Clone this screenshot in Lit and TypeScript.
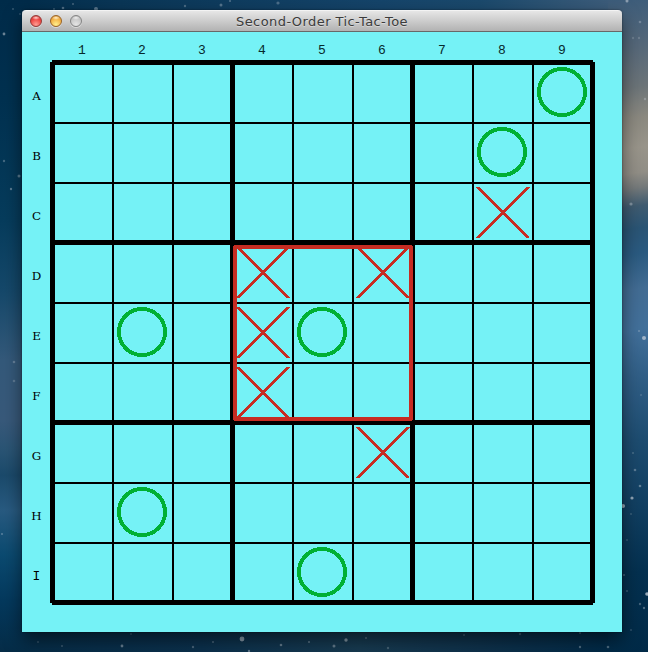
import { LitElement, html, svg, css } from "lit";
import { customElement, property } from "lit/decorators.js";

const CELL = 60;
const LINES = [0, 1, 2, 3, 4, 5, 6, 7, 8, 9];
const COLS = ["1", "2", "3", "4", "5", "6", "7", "8", "9"];
const ROWS = ["A", "B", "C", "D", "E", "F", "G", "H", "I"];

const NOUGHTS = ["A9", "B8", "E2", "E5", "H2", "I5"];
const CROSSES = ["C8", "D4", "D6", "E4", "F4", "G6"];

// x, y, radius, opacity
const STARS: number[][] = [
  [4, 34, 1.4, 0.5], [13, 9, 1, 0.25], [4, 161, 1.2, 0.3], [19, 176, 1.5, 0.4], [11, 189, 1.2, 0.4],
  [14, 362, 1.3, 0.3], [14, 381, 1.3, 0.25], [2, 534, 1, 0.35], [20, 14, 1, 0.2],
  [63, 8, 1.3, 0.35], [73, 4, 1, 0.3], [96, 9, 2, 0.4], [54, 9, 1, 0.25], [185, 6, 1.2, 0.3],
  [221, 5, 1.5, 0.35], [230, 1, 1, 0.35], [278, 3, 1.6, 0.3],
  [627, 1, 1.5, 0.5], [640, 22, 1.3, 0.3], [633, 38, 1.2, 0.2], [639, 38, 1.2, 0.2], [645, 99, 1.2, 0.3],
  [631, 204, 1.6, 0.4], [644, 338, 2, 0.65], [639, 331, 1, 0.3], [641, 395, 1, 0.2],
  [633, 453, 1, 0.25], [635, 470, 1.3, 0.35], [640, 486, 1.3, 0.4], [632, 498, 1.6, 0.65],
  [623, 506, 2, 0.7], [631, 514, 1, 0.2], [627, 540, 1, 0.2], [624, 575, 1, 0.3], [627, 591, 1, 0.25],
  [647, 594, 1.8, 0.7], [640, 604, 1.2, 0.3], [644, 608, 1.2, 0.35], [631, 630, 1, 0.2],
  [62, 646, 1, 0.25], [38, 642, 1, 0.2], [122, 646, 1.4, 0.45], [131, 634, 1, 0.2], [193, 647, 1.2, 0.3],
  [213, 642, 1, 0.3], [242, 639, 2.4, 0.6], [249, 651, 1.2, 0.4], [281, 645, 1.3, 0.4], [309, 642, 1.1, 0.35],
  [334, 646, 1.5, 0.4], [346, 640, 1.7, 0.55], [366, 638, 1, 0.3], [388, 648, 1.2, 0.25],
  [464, 635, 1, 0.25], [520, 634, 1.2, 0.25], [580, 647, 1.2, 0.35], [608, 647, 1.3, 0.35], [580, 633, 1, 0.3],
];

@customElement("star-field")
export class StarField extends LitElement {
  static styles = css`
    :host { position: absolute; inset: 0; }
    svg { display: block; }
    circle { fill: #d5dce4; }
  `;
  render() {
    return html`<svg width="648" height="652">
      ${STARS.map(([x, y, r, o]) => svg`<circle cx=${x} cy=${y} r=${r} opacity=${o}></circle>`)}
    </svg>`;
  }
}

@customElement("title-bar")
export class TitleBar extends LitElement {
  @property() heading = "";
  static styles = css`
    :host {
      box-sizing: border-box;
      height: 22px;
      display: grid;
      grid-template-columns: 60px 1fr 60px;
      align-items: center;
      border-radius: 4px 4px 0 0;
      border-top: 1px solid #f3f3f3;
      border-bottom: 1px solid #686868;
      background: linear-gradient(#e6e6e6, #b2b2b2);
    }
    .lights { display: flex; gap: 8px; padding-left: 8px; }
    .light {
      box-sizing: border-box;
      width: 12px;
      height: 12px;
      border-radius: 50%;
      border: 1px solid;
      box-shadow: 0 1px 0 rgba(255, 255, 255, 0.45);
    }
    .close {
      border-color: #943a37;
      background: radial-gradient(ellipse 4px 2px at 50% 18%, #ffd9d5, transparent),
        radial-gradient(circle at 50% 85%, #ff9d92, #ee4441 60%, #c93835);
    }
    .minimize {
      border-color: #9a6427;
      background: radial-gradient(ellipse 4px 2px at 50% 18%, #fff2d0, transparent),
        radial-gradient(circle at 50% 85%, #fff08d, #f3b145 60%, #cf8630);
    }
    .zoom {
      border-color: #858585;
      background: radial-gradient(ellipse 4px 2px at 50% 18%, #f0f0f0, transparent),
        radial-gradient(circle at 50% 85%, #e5e5e5, #c8c8c8 60%, #acacac);
    }
    .title {
      text-align: center;
      white-space: nowrap;
      padding-top: 2px;
      font: 13px/18px "DejaVu Sans", sans-serif;
      letter-spacing: 0.42px;
      color: #3c3c3c;
      text-shadow: 0 1px 0 rgba(255, 255, 255, 0.4);
    }
  `;
  render() {
    return html`
      <div class="lights">
        <span class="light close"></span>
        <span class="light minimize"></span>
        <span class="light zoom"></span>
      </div>
      <div class="title">${this.heading}</div>
    `;
  }
}

@customElement("game-board")
export class GameBoard extends LitElement {
  static styles = css`
    :host { display: block; width: 545px; height: 545px; }
    svg { display: block; shape-rendering: crispEdges; }
    .grid { fill: #000; }
    .nought { fill: none; stroke: #00b034; stroke-width: 1; }
    .cross { fill: #c72c22; }
    .active { fill: #c72c22; }
  `;

  private origin(square: string) {
    return [COLS.indexOf(square[1]) * CELL, ROWS.indexOf(square[0]) * CELL];
  }

  private line(i: number) {
    const thick = i % 3 === 0;
    const at = i * CELL + (thick ? 0 : 2);
    const w = thick ? 5 : 2;
    return svg`
      <rect class="grid" x=${at} y="2" width=${w} height="541"></rect>
      <rect class="grid" x="2" y=${at} width="541" height=${w}></rect>`;
  }

  private nought(square: string) {
    const [x, y] = this.origin(square);
    return [21.5, 22.5, 23.5, 24.5].map(
      (r) => svg`<circle class="nought" cx=${x + 32} cy=${y + 32} r=${r}></circle>`
    );
  }

  private cross(square: string) {
    const [x, y] = this.origin(square);
    return svg`<g class="cross" transform="translate(${x} ${y})">
      <polygon points="6,7 9.6,7 60,58 56.4,58"></polygon>
      <polygon points="60,7 56.4,7 6,58 9.6,58"></polygon>
    </g>`;
  }

  render() {
    return html`<svg width="545" height="545">
      ${LINES.map((i) => this.line(i))}
      ${NOUGHTS.map((s) => this.nought(s))}
      ${CROSSES.map((s) => this.cross(s))}
      <g class="active">
        <rect x="184" y="185" width="178" height="4"></rect>
        <rect x="184" y="357" width="178" height="4"></rect>
        <rect x="183" y="186" width="4" height="174"></rect>
        <rect x="359" y="186" width="4" height="174"></rect>
      </g>
    </svg>`;
  }
}

@customElement("app-root")
export class AppRoot extends LitElement {
  static styles = css`
    :host {
      display: block;
      position: relative;
      box-sizing: border-box;
      width: 648px;
      height: 652px;
      padding: 10px 26px 20px 22px;
      overflow: hidden;
      background:
        linear-gradient(172deg, #3c5c7a 0, #566879 50px, #6c7478 90px, #8a887f 120px, #98948a 150px,
          #918e86 175px, #74797a 190px, #3f5b70 208px, #2a5474 230px, #2a5a80 255px, #426c93 290px,
          #42709a 330px, #315f87 375px, #1d4c70 440px, #103e60 510px, #04304f 570px, #012a47 652px)
          right / 40px 100% no-repeat,
        linear-gradient(#002b49 0, #013150 100px, #063c5c 220px, #15486a 290px, #34597a 360px,
          #38597a 420px, #2a5474 450px, #1b4a6b 475px, #285a80 510px, #0b4a70 555px, #04395d 600px, #052c47 652px)
          left / 30px 100% no-repeat,
        linear-gradient(90deg, #002b49, #0a3656 120px, #15446a 380px, #1b496c 480px, #3c5c7a 610px)
          top / 100% 40px no-repeat,
        linear-gradient(90deg, #052c47, #0b304c 200px, #173a50 360px, #0e314b 480px, #012a47 610px);
    }
    .window {
      position: relative;
      border-radius: 4px 4px 0 0;
      box-shadow: 0 8px 18px rgba(0, 0, 0, 0.5), 0 0 2px rgba(0, 0, 0, 0.5);
    }
    .content {
      box-sizing: border-box;
      height: 600px;
      background: #75f2f6;
      padding: 10px 0 0 0;
      display: grid;
      grid-template-columns: 28px 545px;
      grid-template-rows: 18px 545px;
      color: #000;
    }
    .cols {
      grid-column: 2;
      display: grid;
      grid-template-columns: repeat(9, 60px);
      padding-left: 2px;
      text-align: center;
      font: 13px/18px "Liberation Mono", monospace;
      color: #06292b;
    }
    .rows {
      display: grid;
      grid-template-rows: repeat(9, 60px);
      align-items: center;
      text-align: center;
      padding: 7px 0 0 1px;
      font: 11px/16px "DejaVu Serif", serif;
    }
    .row { transform: scaleX(1.08); }
    .narrow { font: 12px/16px "Liberation Mono", monospace; }
  `;
  render() {
    return html`
      <star-field></star-field>
      <div class="window">
        <title-bar heading="Second-Order Tic-Tac-Toe"></title-bar>
        <div class="content">
          <div class="cols">${COLS.map((c) => html`<span>${c}</span>`)}</div>
          <div class="rows">
            ${ROWS.map((r) => html`<span class="row ${r === "I" ? "narrow" : ""}">${r}</span>`)}
          </div>
          <game-board></game-board>
        </div>
      </div>
    `;
  }
}
